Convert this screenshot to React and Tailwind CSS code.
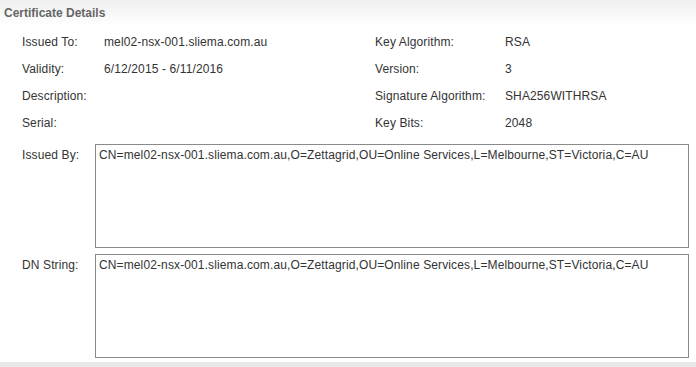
const rows = [
  ["Issued To:", "mel02-nsx-001.sliema.com.au", "Key Algorithm:", "RSA"],
  ["Validity:", "6/12/2015 - 6/11/2016", "Version:", "3"],
  ["Description:", "", "Signature Algorithm:", "SHA256WITHRSA"],
  ["Serial:", "", "Key Bits:", "2048"],
];

const dn =
  "CN=mel02-nsx-001.sliema.com.au,O=Zettagrid,OU=Online Services,L=Melbourne,ST=Victoria,C=AU";

function BoxField({ label, value }) {
  return (
    <div className="flex">
      <div className="w-[73px] pt-[4px] leading-[14px]">{label}</div>
      <div className="w-[594px] h-[104px] border border-[#8a8a8a] bg-white px-[3px] pt-[3px] leading-[14px]">
        {value}
      </div>
    </div>
  );
}

export default function App() {
  return (
    <div
      className="w-[696px] h-[367px] bg-white flex flex-col text-[12px] text-[#333] tracking-[0.12px]"
      style={{ fontFamily: '"Liberation Sans", Arial, sans-serif' }}
    >
      <div className="h-[26px] bg-gradient-to-b from-[#efefef] to-white flex items-center pl-[4px] font-bold text-[#666] tracking-normal">
        Certificate Details
      </div>
      <div className="pt-[2px] pl-[22px]">
        {rows.map(([l1, v1, l2, v2]) => (
          <div key={l1} className="h-[27px] flex items-center">
            <div className="w-[82px]">{l1}</div>
            <div className="w-[271px]">{v1}</div>
            <div className="w-[130px]">{l2}</div>
            <div>{v2}</div>
          </div>
        ))}
        <div className="mt-[8px] flex flex-col gap-[6px]">
          <BoxField label="Issued By:" value={dn} />
          <BoxField label="DN String:" value={dn} />
        </div>
      </div>
      <div className="flex-1" />
      <div className="h-[5px] bg-[#e8e8e8]" />
    </div>
  );
}
